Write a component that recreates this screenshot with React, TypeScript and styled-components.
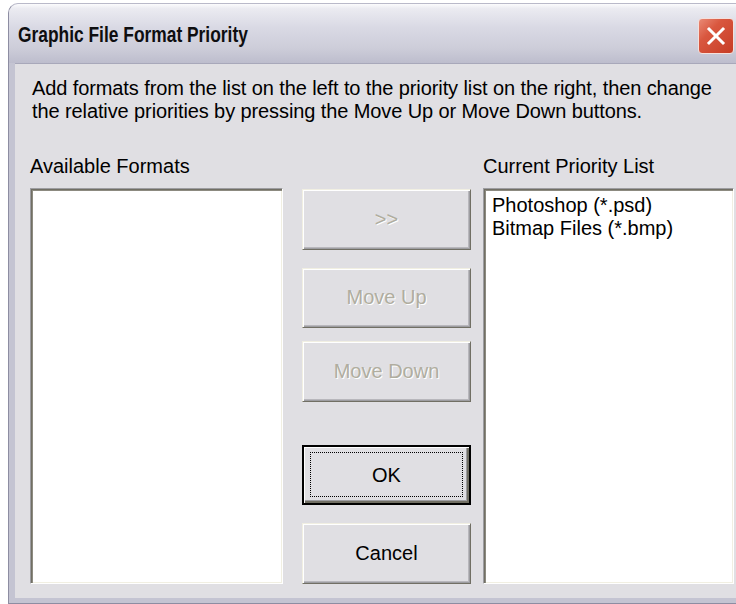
import React from "react";
import styled, { createGlobalStyle } from "styled-components";

const GlobalStyle = createGlobalStyle`
  html, body {
    margin: 0;
    padding: 0;
    background: #ffffff;
    overflow: hidden;
  }
`;

const face = "#e0dfe3";

const Page = styled.div`
  width: 736px;
  height: 604px;
  overflow: hidden;
  padding: 3px 0 0 8px;
  box-sizing: border-box;
  font-family: "Liberation Sans", Arial, sans-serif;
`;

const Window = styled.div`
  width: 748px;
  height: 601px;
  display: flex;
  flex-direction: column;
  border-radius: 10px 10px 0 0;
  background: #c4c4d2;
  border: 1px solid #8d8da2;
  border-top-color: #b9b9c9;
  box-sizing: border-box;
  overflow: hidden;
`;

const TitleBar = styled.div`
  height: 59px;
  flex: none;
  display: flex;
  align-items: center;
  padding: 0 21px 0 9px;
  background: linear-gradient(
    to bottom,
    #fbfbfd 0%,
    #ebebf1 8%,
    #d9d9e4 40%,
    #cdcdd9 75%,
    #bdbdcd 100%
  );
`;

const Title = styled.h1`
  flex: 1;
  margin: 3px 0 0 0;
  font-family: "Liberation Sans", Arial, sans-serif;
  font-weight: bold;
  font-size: 22px;
  color: #0e0e10;
  white-space: nowrap;
  transform: scaleX(0.79);
  transform-origin: left center;
`;

const CloseButton = styled.div`
  width: 36px;
  height: 36px;
  box-sizing: border-box;
  border-radius: 4px;
  border: 1px solid #f4e0dc;
  background: linear-gradient(135deg, #e98a76 0%, #d9573f 35%, #c63c25 100%);
  display: flex;
  align-items: center;
  justify-content: center;
  margin-top: 4px;
`;

const Client = styled.div`
  flex: 1;
  margin: 0 6px 5px 6px;
  background: ${face};
  border-top: 1px solid #a8a8ba;
  display: flex;
  flex-direction: column;
  padding: 13px 15px 14px 15px;
  color: #000;
  font-size: 20px;
`;

const Instructions = styled.p`
  margin: 0 0 0 2px;
  line-height: 23px;
  width: 702px;
  letter-spacing: -0.1px;
`;

const Body = styled.div`
  margin-top: 32px;
  display: grid;
  grid-template-columns: 253px 200px 251px;
  grid-template-rows: 23px 396px;
  row-gap: 10px;
`;

const Label = styled.div`
  line-height: 23px;
  white-space: nowrap;
`;

const ListBox = styled.div`
  box-sizing: border-box;
  background: #ffffff;
  border-style: solid;
  border-width: 1px;
  border-color: #9d9da1 #ffffff #ffffff #9d9da1;
  box-shadow: inset 1px 1px 0 #716f64, inset 2px 2px 0 #8c8a80, inset -1px -1px 0 #f1efe2;
  padding: 5px 8px;
  line-height: 23px;
  white-space: nowrap;
  overflow: hidden;
`;

const ButtonStack = styled.div`
  grid-column: 2;
  grid-row: 2;
  display: flex;
  flex-direction: column;
  margin: 0 12px 0 19px;
`;

const Button = styled.div<{ $disabled?: boolean; $default?: boolean; $gap: number }>`
  position: relative;
  height: 62px;
  margin-top: ${(p) => p.$gap}px;
  box-sizing: border-box;
  display: flex;
  align-items: center;
  justify-content: center;
  background: ${face};
  border-style: solid;
  border-width: ${(p) => (p.$default ? "2px" : "1px")};
  border-color: ${(p) =>
    p.$default ? "#000000" : "#f1efe2 #716f64 #716f64 #f1efe2"};
  box-shadow: ${(p) =>
    p.$default
      ? "inset 1px 1px 0 #ffffff, inset -2px -2px 0 #716f64, inset -3px -3px 0 #9d9da1"
      : "inset 1px 1px 0 #ffffff, inset -1px -1px 0 #9d9da1, inset -2px -2px 0 #b8b7bc"};
  color: ${(p) => (p.$disabled ? "#b0ad9f" : "#000000")};
  text-shadow: ${(p) => (p.$disabled ? "1px 1px 0 #ffffff" : "none")};
  font-size: 20px;
`;

const FocusRing = styled.div`
  position: absolute;
  inset: 5px 6px 6px 6px;
  border: 1px dotted #000;
`;

const CloseGlyph = () => (
  <svg width="22" height="22" viewBox="0 0 22 22">
    <path d="M4 4 L18 18 M18 4 L4 18" stroke="#ffffff" strokeWidth="3" strokeLinecap="square" />
  </svg>
);

export default function App() {
  return (
    <>
      <GlobalStyle />
      <Page>
        <Window>
          <TitleBar>
            <Title>Graphic File Format Priority</Title>
            <CloseButton>
              <CloseGlyph />
            </CloseButton>
          </TitleBar>
          <Client>
            <Instructions>
              Add formats from the list on the left to the priority list on the right, then change
              the relative priorities by pressing the Move Up or Move Down buttons.
            </Instructions>
            <Body>
              <Label>Available Formats</Label>
              <div />
              <Label>Current Priority List</Label>
              <ListBox />
              <ButtonStack>
                <Button $disabled $gap={1}>&gt;&gt;</Button>
                <Button $disabled $gap={18}>Move Up</Button>
                <Button $disabled $gap={13}>Move Down</Button>
                <Button $default $gap={43}>
                  OK
                  <FocusRing />
                </Button>
                <Button $gap={18}>Cancel</Button>
              </ButtonStack>
              <ListBox>
                <div>Photoshop (*.psd)</div>
                <div>Bitmap Files (*.bmp)</div>
              </ListBox>
            </Body>
          </Client>
        </Window>
      </Page>
    </>
  );
}
